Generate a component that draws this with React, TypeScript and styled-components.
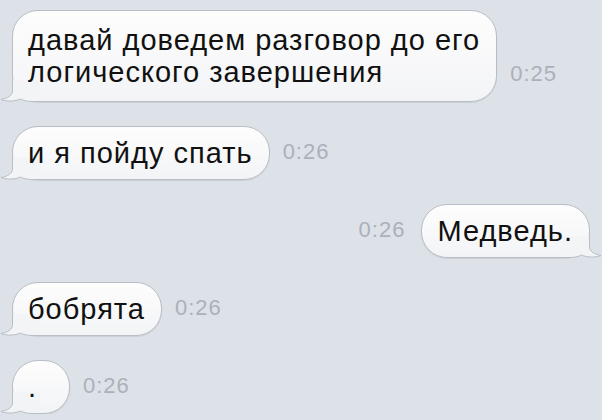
import styled, { createGlobalStyle } from "styled-components";

const GlobalStyle = createGlobalStyle`
  html, body {
    margin: 0;
    padding: 0;
    background: #dde1e8;
  }
  body {
    font-family: "Liberation Sans", Arial, sans-serif;
  }
`;

type Side = "in" | "out";

interface Message {
  text: string[];
  time: string;
  side: Side;
}

const messages: Message[] = [
  {
    text: ["давай доведем разговор до его", "логического завершения"],
    time: "0:25",
    side: "in",
  },
  { text: ["и я пойду спать"], time: "0:26", side: "in" },
  { text: ["Медведь."], time: "0:26", side: "out" },
  { text: ["бобрята"], time: "0:26", side: "in" },
  { text: ["."], time: "0:26", side: "in" },
];

export default function App() {
  return (
    <>
      <GlobalStyle />
      <Thread>
        {messages.map((m, i) => (
          <Row key={i} $side={m.side}>
            {m.side === "out" && <Time>{m.time}</Time>}
            <Bubble $multi={m.text.length > 1}>
              <Tail $side={m.side} />
              {m.text.map((line, j) => (
                <Line key={j}>{line}</Line>
              ))}
            </Bubble>
            {m.side === "in" && <Time>{m.time}</Time>}
          </Row>
        ))}
      </Thread>
    </>
  );
}

function Tail({ $side }: { $side: Side }) {
  return (
    <TailSvg $side={$side} width="40" height="22" viewBox="0 0 40 22">
      <path
        d="M12.5 0 V11 C12.5 15 8 18.5 1 19.5 C7 21.8 15 21.5 20.5 19 C24 21 28 21.5 33 21.5 H40 V0 Z"
        fill="#f3f4f6"
      />
      <path
        d="M12.5 0 V11 C12.5 15 8 18.5 1 19.5 C7 21.8 15 21.5 20.5 19 C24 21 28 21.5 33 21.5 H40"
        fill="none"
        stroke="#b9bec6"
        strokeWidth="1"
      />
    </TailSvg>
  );
}

const Thread = styled.div`
  display: flex;
  flex-direction: column;
  gap: 24px;
  padding: 10px 12px 0 12px;
`;

const Row = styled.div<{ $side: Side }>`
  display: flex;
  align-items: flex-end;
  justify-content: ${(p) => (p.$side === "out" ? "flex-end" : "flex-start")};
  gap: ${(p) => (p.$side === "out" ? "16px" : "13px")};
`;

const Bubble = styled.div<{ $multi: boolean }>`
  position: relative;
  box-sizing: border-box;
  min-width: 58px;
  padding: ${(p) => (p.$multi ? "13px" : "10px")} 16px;
  padding-left: 15px;
  border: 1px solid #b9bec6;
  border-radius: 26px;
  background: linear-gradient(#fdfdfd, #f3f4f6);
  box-shadow: 0 1px 1px rgba(0, 0, 0, 0.08);
  color: #111;
  font-size: 29px;
  line-height: 32px;
  letter-spacing: 1px;
`;

const Line = styled.div`
  position: relative;
  white-space: nowrap;
`;

const TailSvg = styled.svg<{ $side: Side }>`
  position: absolute;
  bottom: -1px;
  ${(p) =>
    p.$side === "in"
      ? "left: -13px;"
      : "right: -13px; transform: scaleX(-1);"}
`;

const Time = styled.span`
  margin-bottom: 17px;
  font-size: 22px;
  line-height: 22px;
  color: #abb1bb;
  letter-spacing: 1px;
`;
